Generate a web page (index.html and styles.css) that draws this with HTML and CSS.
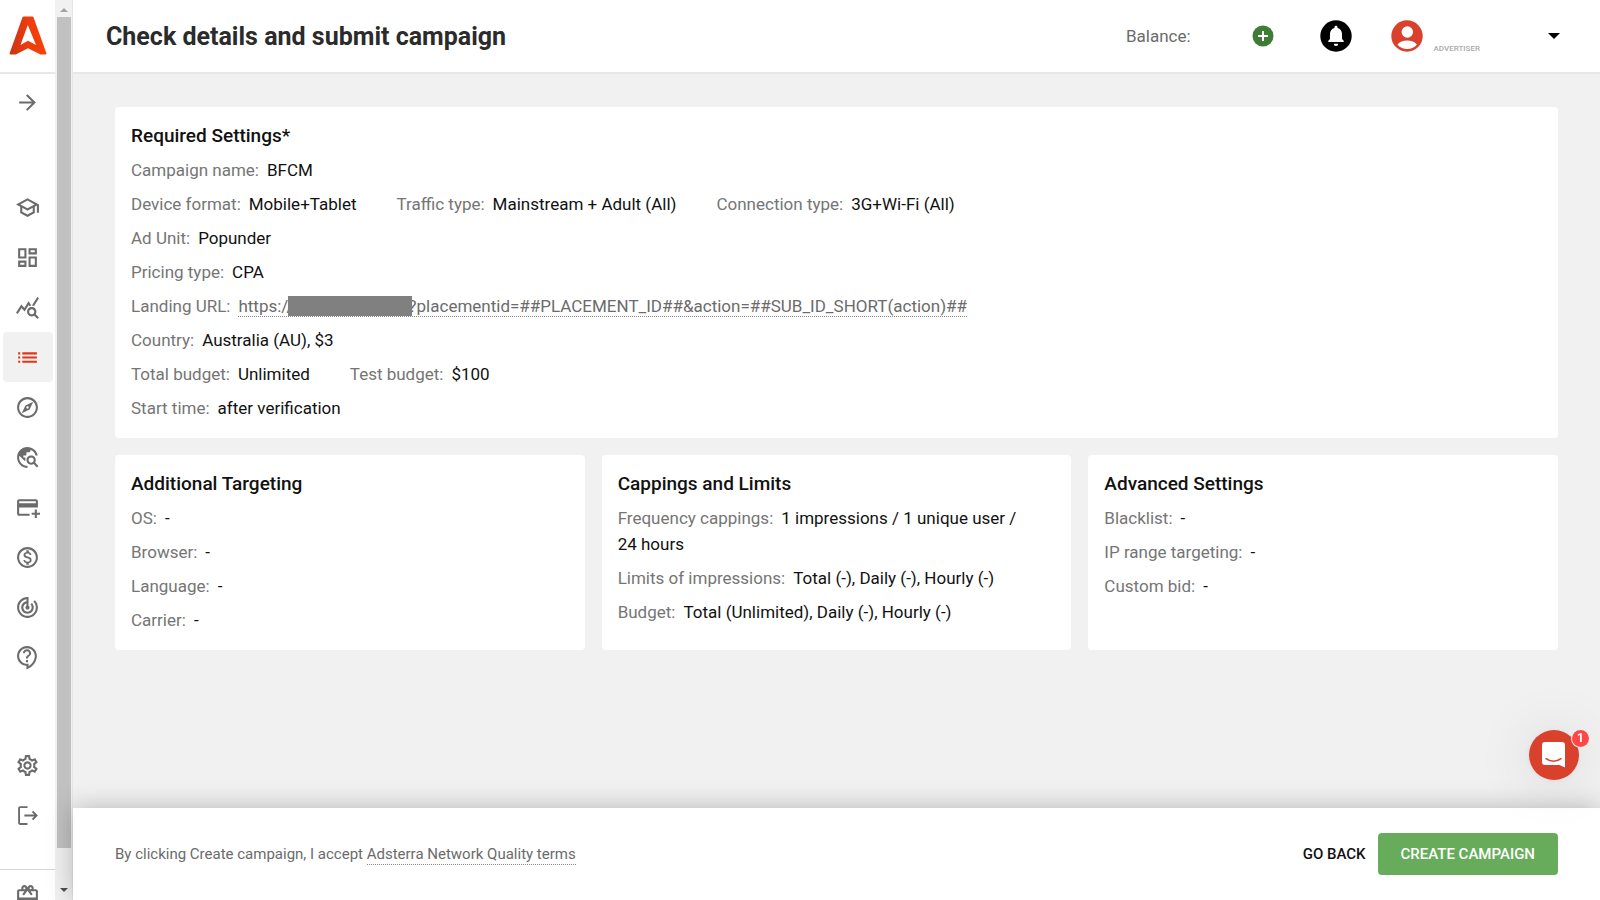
FILE: index.html
```html
<!DOCTYPE html>
<html lang="en">
<head>
<meta charset="utf-8">
<title>Check details and submit campaign</title>
<link rel="stylesheet" href="styles.css">
</head>
<body>
<div class="app">
  <aside class="sidebar">
    <a class="logo" href="#" aria-label="Adsterra">
      <svg width="38" height="40" viewBox="0 0 38 40">
        <defs><linearGradient id="flame" x1="0" x2="1"><stop offset="0" stop-color="#c63418"/><stop offset=".5" stop-color="#ee3c0c"/><stop offset="1" stop-color="#f4430a"/></linearGradient></defs>
        <path fill="url(#flame)" fill-rule="evenodd" d="M14.500.5h9l1 .8L37.500 37.500l-.8 1H31.500L19 32.300 6.800 38.500H1.300l-.8-1L13.500 1.300zM18.800 9L11.500 29l7.500-4.300 8 4.300z"/>
      </svg>
    </a>
    <button class="nav-item expand" aria-label="Expand menu"><svg class="icon" viewBox="0 0 24 24"><path d="M4 11h12.200l-5.600-5.600L12 4l8 8-8 8-1.400-1.400 5.600-5.600H4z"/></svg></button>
    <nav class="nav-group main-nav">
      <a class="nav-item" href="#" aria-label="Academy"><svg class="icon" viewBox="0 0 24 24"><path d="M12 3L1 9l4 2.180v6L12 21l7-3.820v-6l2-1.090V17h2V9L12 3zm6.820 6L12 12.720 5.180 9 12 5.280 18.820 9zM17 15.990l-5 2.730-5-2.730v-3.720L12 15l5-2.730v3.720z"/></svg></a>
      <a class="nav-item" href="#" aria-label="Dashboard"><svg class="icon" viewBox="0 0 24 24"><path d="M19 5v2h-4V5h4M9 5v6H5V5h4m10 8v6h-4v-6h4M9 17v2H5v-2h4M21 3h-8v6h8V3zM11 3H3v10h8V3zm10 8h-8v10h8V11zm-10 4H3v6h8v-6z"/></svg></a>
      <a class="nav-item" href="#" aria-label="Statistics"><svg class="icon" viewBox="0 0 24 24"><path d="M19.88 18.47c.44-.7.7-1.51.7-2.39 0-2.49-2.01-4.5-4.5-4.5s-4.5 2.01-4.5 4.5 2.01 4.5 4.49 4.5c.88 0 1.7-.26 2.39-.7L21.58 23 23 21.58l-3.12-3.11zm-3.8.11c-1.38 0-2.5-1.12-2.5-2.5s1.12-2.5 2.5-2.5 2.5 1.12 2.5 2.5-1.12 2.5-2.5 2.5zm-.36-8.5c-.74.02-1.45.18-2.1.45l-.55-.83-3.8 6.18-3.01-3.52-3.63 5.81L1 17l5-8 3 3.5L13 6l2.72 4.08zm2.59.5c-.64-.28-1.33-.45-2.05-.49L21.38 2 23 3.18l-4.69 7.4z"/></svg></a>
      <a class="nav-item active" href="#" aria-label="Campaigns" aria-current="page"><svg class="icon" viewBox="0 0 24 24"><path d="M3 13h2v-2H3v2zm0 4h2v-2H3v2zm0-8h2V7H3v2zm4 4h14v-2H7v2zm0 4h14v-2H7v2zM7 7v2h14V7H7z"/></svg></a>
      <a class="nav-item" href="#" aria-label="Explore"><svg class="icon" viewBox="0 0 24 24"><path d="M12 2C6.48 2 2 6.48 2 12s4.48 10 10 10 10-4.48 10-10S17.52 2 12 2zm0 18c-4.41 0-8-3.59-8-8s3.59-8 8-8 8 3.59 8 8-3.59 8-8 8zm-5.5-2.5l7.51-3.49L17.5 6.5 9.99 9.99 6.5 17.5zm5.5-6.600c.61 0 1.100.49 1.100 1.100s-.49 1.100-1.100 1.100-1.100-.49-1.100-1.100.49-1.100 1.100-1.100z"/></svg></a>
      <a class="nav-item" href="#" aria-label="Traffic estimator"><svg class="icon" viewBox="0 0 24 24"><path d="M19.3 16.9c.4-.7.7-1.5.7-2.4 0-2.5-2-4.5-4.5-4.5S11 12 11 14.5s2 4.5 4.5 4.5c.9 0 1.7-.3 2.4-.7l3.2 3.2 1.4-1.4-3.2-3.2zm-3.8.1c-1.4 0-2.5-1.1-2.5-2.5s1.1-2.5 2.5-2.5 2.5 1.1 2.5 2.5-1.1 2.5-2.5 2.5zM12 20v2C6.48 22 2 17.52 2 12S6.48 2 12 2c4.84 0 8.87 3.44 9.8 8h-2.07c-.64-2.46-2.4-4.47-4.73-5.41V5c0 1.1-.9 2-2 2h-2v2c0 .55-.45 1-1 1H8v2h2v3H9l-4.79-4.79C4.08 10.79 4 11.38 4 12c0 4.41 3.59 8 8 8z"/></svg></a>
      <a class="nav-item" href="#" aria-label="Add funds"><svg class="icon" viewBox="0 0 24 24"><path d="M20 4H4c-1.110 0-1.990.89-1.990 2L2 18c0 1.110.89 2 2 2h10v-2H4v-6h18V6c0-1.110-.89-2-2-2zm0 4H4V6h16v2zm4 9v2h-3v3h-2v-3h-3v-2h3v-3h2v3h3z"/></svg></a>
      <a class="nav-item" href="#" aria-label="Finance"><svg class="icon" viewBox="0 0 24 24"><path d="M12 2C6.48 2 2 6.48 2 12s4.48 10 10 10 10-4.48 10-10S17.52 2 12 2zm0 18c-4.41 0-8-3.59-8-8s3.59-8 8-8 8 3.59 8 8-3.59 8-8 8zm.31-8.86c-1.77-.45-2.34-.94-2.34-1.67 0-.84.79-1.43 2.1-1.43 1.38 0 1.9.66 1.94 1.64h1.71c-.05-1.34-.87-2.57-2.49-2.97V5H10.9v1.69c-1.51.32-2.72 1.3-2.72 2.81 0 1.79 1.49 2.69 3.66 3.21 1.95.46 2.34 1.15 2.34 1.87 0 .53-.39 1.39-2.1 1.39-1.6 0-2.23-.72-2.32-1.64H8.04c.1 1.7 1.36 2.66 2.86 2.97V19h2.34v-1.67c1.52-.29 2.72-1.16 2.73-2.77-.01-2.2-1.9-2.96-3.66-3.42z"/></svg></a>
      <a class="nav-item" href="#" aria-label="Tracking"><svg class="icon" viewBox="0 0 24 24"><path d="M19.07 4.93l-1.41 1.41C19.1 7.79 20 9.79 20 12c0 4.42-3.58 8-8 8s-8-3.58-8-8c0-4.08 3.05-7.44 7-7.93v2.02C8.16 6.57 6 9.03 6 12c0 3.31 2.69 6 6 6s6-2.69 6-6c0-1.66-.67-3.16-1.76-4.24l-1.41 1.41C15.55 9.9 16 10.9 16 12c0 2.21-1.79 4-4 4s-4-1.79-4-4c0-1.86 1.28-3.41 3-3.86v2.14c-.6.35-1 .98-1 1.72 0 1.1.9 2 2 2s2-.9 2-2c0-.74-.4-1.38-1-1.72V2h-1C6.48 2 2 6.48 2 12s4.48 10 10 10 10-4.48 10-10c0-2.76-1.12-5.26-2.93-7.07z"/></svg></a>
      <a class="nav-item" href="#" aria-label="Support"><svg class="icon" viewBox="0 0 24 24"><path d="M11 23.59v-3.6c-5.01-.26-9-4.42-9-9.49C2 5.26 6.26 1 11.5 1S21 5.26 21 10.5c0 4.95-3.44 9.93-8.57 12.4l-1.43.69zM11.5 3C7.36 3 4 6.36 4 10.5S7.36 18 11.5 18H13v2.3c3.64-2.3 6-6.08 6-9.8C19 6.36 15.64 3 11.5 3zm-1 11.5h2v2h-2zm2-1.5h-2c0-3.25 3-3 3-5 0-1.1-.9-2-2-2s-2 .9-2 2h-2c0-2.21 1.79-4 4-4s4 1.79 4 4c0 2.5-3 2.75-3 5z"/></svg></a>
    </nav>
    <nav class="nav-group account-nav">
      <a class="nav-item" href="#" aria-label="Settings"><svg class="icon" viewBox="0 0 24 24"><path d="M19.43 12.98c.04-.32.07-.64.07-.98 0-.34-.03-.66-.07-.98l2.11-1.65c.19-.15.24-.42.12-.64l-2-3.46c-.09-.16-.26-.25-.44-.25-.06 0-.12.01-.17.03l-2.49 1c-.52-.4-1.08-.73-1.69-.98l-.38-2.65C14.46 2.18 14.25 2 14 2h-4c-.25 0-.46.18-.49.42l-.38 2.65c-.61.25-1.17.59-1.69.98l-2.49-1c-.06-.02-.12-.03-.18-.03-.17 0-.34.09-.43.25l-2 3.46c-.13.22-.07.49.12.64l2.11 1.65c-.04.32-.07.65-.07.98 0 .33.03.66.07.98l-2.11 1.65c-.19.15-.24.42-.12.64l2 3.46c.09.16.26.25.44.25.06 0 .12-.01.17-.03l2.49-1c.52.4 1.08.73 1.69.98l.38 2.65c.03.24.24.42.49.42h4c.25 0 .46-.18.49-.42l.38-2.65c.61-.25 1.17-.59 1.69-.98l2.49 1c.06.02.12.03.18.03.17 0 .34-.09.43-.25l2-3.46c.12-.22.07-.49-.12-.64l-2.11-1.65zm-1.98-1.71c.04.31.05.52.05.73 0 .21-.02.43-.05.73l-.14 1.13.89.7 1.08.84-.7 1.21-1.27-.51-1.04-.42-.9.68c-.43.32-.84.56-1.25.73l-1.06.43-.16 1.13-.2 1.35h-1.4l-.19-1.35-.16-1.13-1.06-.43c-.43-.18-.83-.41-1.23-.71l-.91-.7-1.06.43-1.27.51-.7-1.21 1.08-.84.89-.7-.14-1.13c-.03-.31-.05-.54-.05-.74s.02-.43.05-.73l.14-1.13-.89-.7-1.08-.84.7-1.21 1.27.51 1.04.42.9-.68c.43-.32.84-.56 1.25-.73l1.06-.43.16-1.13.2-1.35h1.39l.19 1.35.16 1.13 1.06.43c.43.18.83.41 1.23.71l.91.7 1.06-.43 1.27-.51.7 1.21-1.07.85-.89.7.14 1.13zM12 8c-2.21 0-4 1.79-4 4s1.79 4 4 4 4-1.79 4-4-1.79-4-4-4zm0 6c-1.1 0-2-.9-2-2s.9-2 2-2 2 .9 2 2-.9 2-2 2z"/></svg></a>
      <a class="nav-item" href="#" aria-label="Log out"><svg class="icon" viewBox="0 0 24 24"><path d="M12 3H5c-1.100 0-2 .9-2 2v14c0 1.100.9 2 2 2h7v-1.800H4.800V4.800H12zM17.500 7.500l-1.300 1.300 2.300 2.300H9v1.800h9.500l-2.300 2.300 1.300 1.300L22 12z"/></svg></a>
    </nav>
    <nav class="nav-group extra-nav">
      <a class="nav-item" href="#" aria-label="Gifts"><svg class="icon" viewBox="0 0 24 24"><path d="M20 6h-2.180c.11-.31.18-.65.18-1 0-1.660-1.340-3-3-3-1.050 0-1.960.54-2.500 1.350l-.5.67-.5-.68C10.960 2.540 10.050 2 9 2 7.340 2 6 3.340 6 5c0 .35.07.69.18 1H4c-1.110 0-1.990.89-1.990 2L2 19c0 1.110.89 2 2 2h16c1.110 0 2-.89 2-2V8c0-1.110-.89-2-2-2zm-5-2c.55 0 1 .45 1 1s-.45 1-1 1-1-.45-1-1 .45-1 1-1zM9 4c.55 0 1 .45 1 1s-.45 1-1 1-1-.45-1-1 .45-1 1-1zm11 15H4v-2h16v2zm0-5H4V8h5.080L7 10.830 8.620 12 11 8.760l1-1.360 1 1.360L15.380 12 17 10.830 14.920 8H20v6z"/></svg></a>
    </nav>
  </aside>

  <div class="scrollbar" aria-hidden="true">
    <svg class="scroll-arrow" width="8" height="4" viewBox="0 0 8 4"><path fill="#a3a3a3" d="M0 4l4-4 4 4z"/></svg>
    <div class="scroll-track"><div class="scroll-thumb"></div></div>
    <svg class="scroll-arrow" width="8" height="4" viewBox="0 0 8 4"><path fill="#505050" d="M0 0h8L4 4z"/></svg>
  </div>

  <div class="page">
    <header class="topbar">
      <h1 class="page-title">Check details and submit campaign</h1>
      <div class="topbar-tools">
        <span class="balance">Balance:</span>
        <button class="tool add-funds" aria-label="Add funds"><svg width="22" height="22" viewBox="0 0 22 22"><circle cx="11" cy="11" r="10.500" fill="#3f7d36"/><path d="M11 6v10M6 11h10" stroke="#fff" stroke-width="2"/></svg></button>
        <button class="tool" aria-label="Notifications"><svg width="32" height="32" viewBox="0 0 32 32"><circle cx="16" cy="16" r="15.700"/><path fill="#fff" d="M16 5.800c.9 0 1.500.6 1.500 1.400v.7c2.900.7 4.500 3 4.500 6v5l1.700 1.900v1.200H8.300v-1.200L10 18.900v-5c0-3 1.600-5.300 4.500-6v-.7c0-.8.6-1.400 1.500-1.400zM13.800 23.700h4.400a2.200 2.200 0 0 1-4.400 0z"/></svg></button>
        <button class="tool profile" aria-label="Profile menu">
          <svg width="32" height="32" viewBox="0 0 32 32"><circle cx="16" cy="16" r="15.700" fill="#d9412c"/><circle cx="16.300" cy="12" r="5.700" fill="#fff"/><path fill="#fff" d="M6.500 24.500c2-2.600 5.600-4 9.700-4s7.700 1.400 9.700 4c-2 2.800-5.600 4.500-9.700 4.500s-7.700-1.700-9.700-4.500z"/></svg>
          <span class="role">ADVERTISER</span>
          <svg class="caret" width="12" height="6" viewBox="0 0 12 6"><path d="M0 0h12L6 6z"/></svg>
        </button>
      </div>
    </header>

    <main class="content">
      <section class="card">
        <h2 class="card-title">Required Settings*</h2>
        <div class="row"><p class="field"><span class="label">Campaign name:</span>BFCM</p></div>
        <div class="row">
          <p class="field"><span class="label">Device format:</span>Mobile+Tablet</p>
          <p class="field"><span class="label">Traffic type:</span>Mainstream + Adult (All)</p>
          <p class="field"><span class="label">Connection type:</span>3G+Wi-Fi (All)</p>
        </div>
        <div class="row"><p class="field"><span class="label">Ad Unit:</span>Popunder</p></div>
        <div class="row"><p class="field"><span class="label">Pricing type:</span>CPA</p></div>
        <div class="row"><p class="field"><span class="label">Landing URL:</span><a class="dotted-link" href="#">https://<span class="redacted"></span>?placementid=##PLACEMENT_ID##&amp;action=##SUB_ID_SHORT(action)##</a></p></div>
        <div class="row"><p class="field"><span class="label">Country:</span>Australia (AU), $3</p></div>
        <div class="row">
          <p class="field"><span class="label">Total budget:</span>Unlimited</p>
          <p class="field"><span class="label">Test budget:</span>$100</p>
        </div>
        <div class="row"><p class="field"><span class="label">Start time:</span>after verification</p></div>
      </section>

      <div class="card-grid">
        <section class="card">
          <h2 class="card-title">Additional Targeting</h2>
          <p class="field"><span class="label">OS:</span>-</p>
          <p class="field"><span class="label">Browser:</span>-</p>
          <p class="field"><span class="label">Language:</span>-</p>
          <p class="field"><span class="label">Carrier:</span>-</p>
        </section>
        <section class="card">
          <h2 class="card-title">Cappings and Limits</h2>
          <p class="field"><span class="label">Frequency cappings:</span>1 impressions / 1 unique user / 24&nbsp;hours</p>
          <p class="field"><span class="label">Limits of impressions:</span>Total (-), Daily (-), Hourly (-)</p>
          <p class="field"><span class="label">Budget:</span>Total (Unlimited), Daily (-), Hourly (-)</p>
        </section>
        <section class="card">
          <h2 class="card-title">Advanced Settings</h2>
          <p class="field"><span class="label">Blacklist:</span>-</p>
          <p class="field"><span class="label">IP range targeting:</span>-</p>
          <p class="field"><span class="label">Custom bid:</span>-</p>
        </section>
      </div>
    </main>

    <footer class="actions">
      <p class="terms">By clicking Create campaign, I accept <a class="dotted-link" href="#">Adsterra Network Quality terms</a></p>
      <div class="buttons">
        <button class="btn btn-text">GO BACK</button>
        <button class="btn btn-primary">CREATE CAMPAIGN</button>
      </div>
    </footer>
  </div>

  <button class="chat" aria-label="Open chat">
    <svg width="24" height="26" viewBox="0 0 24 26"><path fill="#fff" d="M3 0h17a3 3 0 0 1 3 3v22.500L17.500 23H3a3 3 0 0 1-3-3V3a3 3 0 0 1 3-3z"/><path d="M4 16.700c4.500 3.400 10.500 3.400 15 0" fill="none" stroke="#d9412c" stroke-width="1.500" stroke-linecap="round"/></svg>
    <span class="badge">1</span>
  </button>
</div>
</body>
</html>
```

FILE: styles.css
```css
* { box-sizing: border-box; }

body {
  margin: 0;
  background: #f1f1f1;
  color: #111;
  font: 17px/26px Roboto, sans-serif;
}

h1, h2, p { margin: 0; }

button {
  padding: 0;
  border: 0;
  background: none;
  color: inherit;
  font: inherit;
  cursor: pointer;
}

svg { display: block; }

.app {
  display: flex;
  height: 100vh;
  overflow: hidden;
}

/* Sidebar */
.sidebar {
  display: flex;
  flex: 0 0 55px;
  flex-direction: column;
  align-items: center;
  overflow: hidden;
  background: #fff;
}

.logo {
  display: flex;
  flex: none;
  align-items: center;
  justify-content: center;
  width: 100%;
  height: 74px;
  border-bottom: 2px solid #e8e8e8;
}

.nav-item {
  display: flex;
  flex: none;
  align-items: center;
  justify-content: center;
  width: 50px;
  height: 50px;
  border-radius: 4px;
  color: #6b6b6b;
}

.nav-item.active {
  background: #f1f1f1;
  color: #e03616;
}

.icon {
  width: 25px;
  height: 25px;
  fill: currentColor;
}

.nav-group {
  display: flex;
  flex: none;
  flex-direction: column;
  align-items: center;
  width: 100%;
}

.expand { margin-top: 3px; }
.main-nav { margin-top: 55px; }
.account-nav { margin-top: 58px; }
.extra-nav { margin-top: 29px; border-top: 1px solid #d8d8d8; }

.scrollbar {
  display: flex;
  flex: 0 0 18px;
  flex-direction: column;
  align-items: center;
  padding: 8px 0;
  border-right: 1px solid #e6e6e6;
  background: #f1f1f1;
}

.scroll-arrow { flex: none; }

.scroll-track {
  flex: 1;
  padding: 5px 0 40px;
}

.scroll-thumb {
  width: 14px;
  height: 100%;
  background: #c1c1c1;
}

/* Page */
.page {
  display: flex;
  flex: 1;
  flex-direction: column;
  min-width: 0;
}

.topbar {
  display: flex;
  flex: none;
  align-items: center;
  justify-content: space-between;
  height: 74px;
  padding: 0 40px 0 33px;
  border-bottom: 2px solid #e8e8e8;
  background: #fff;
}

.page-title {
  padding-top: 2px;
  color: #2b2b2b;
  font-size: 25px;
  font-weight: 700;
  line-height: 32px;
}

.topbar-tools {
  display: flex;
  align-items: center;
}

.balance { color: #6b6b6b; }
.tool { display: flex; align-items: center; margin-left: 46px; }
.add-funds { margin-left: 61px; }
.profile { margin-left: 39px; }

.role {
  align-self: flex-end;
  margin-left: 11px;
  color: #aaa;
  font-size: 8px;
  font-weight: 500;
  line-height: 6px;
}

.caret { margin-left: 68px; }

.content {
  display: flex;
  flex: 1;
  flex-direction: column;
  gap: 17px;
  padding: 33px 42px;
}

.card {
  display: flex;
  flex-direction: column;
  gap: 8px;
  padding: 16px 16px 17px;
  border-radius: 4px;
  background: #fff;
}

.card-grid {
  display: grid;
  grid-template-columns: repeat(3, 1fr);
  gap: 17px;
}

.card-title {
  font-size: 19px;
  font-weight: 500;
  line-height: 26px;
}

.row {
  display: flex;
  flex-wrap: wrap;
  column-gap: 40px;
}

.label {
  margin-right: 8px;
  color: #757575;
}

.dotted-link {
  display: inline-block;
  border-bottom: 1px dotted #888;
  color: #6b6b6b;
  line-height: 20px;
  text-decoration: none;
}

.redacted {
  display: inline-block;
  position: relative;
  width: 124px;
  height: 20px;
  margin: 0 -3px 0 -6px;
  background: #808080;
  vertical-align: top;
}

/* Action bar */
.actions {
  display: flex;
  flex: none;
  align-items: center;
  justify-content: space-between;
  height: 92px;
  padding: 0 42px;
  background: #fff;
  box-shadow: 0 0 24px rgba(0, 0, 0, .25);
}

.terms {
  color: #6b6b6b;
  font-size: 15px;
}

.buttons {
  display: flex;
  align-items: center;
  gap: 12px;
}

.btn {
  height: 42px;
  border-radius: 4px;
  font-size: 15px;
  font-weight: 500;
}

.btn-primary {
  padding: 0 23px;
  background: #67ac5b;
  color: #fff;
}

/* Chat launcher */
.chat {
  display: flex;
  position: fixed;
  right: 21px;
  bottom: 120px;
  align-items: center;
  justify-content: center;
  width: 50px;
  height: 50px;
  border-radius: 50%;
  background: #d9412c;
  box-shadow: 0 2px 60px rgba(0, 0, 0, .12), 0 1px 8px rgba(0, 0, 0, .06);
}

.badge {
  position: absolute;
  top: 0;
  right: -10px;
  width: 17px;
  height: 17px;
  border-radius: 50%;
  background: #ff4747;
  box-shadow: 0 0 0 1px #f1f1f1;
  color: #fff;
  font-size: 12px;
  font-weight: 700;
  line-height: 17px;
}
```
